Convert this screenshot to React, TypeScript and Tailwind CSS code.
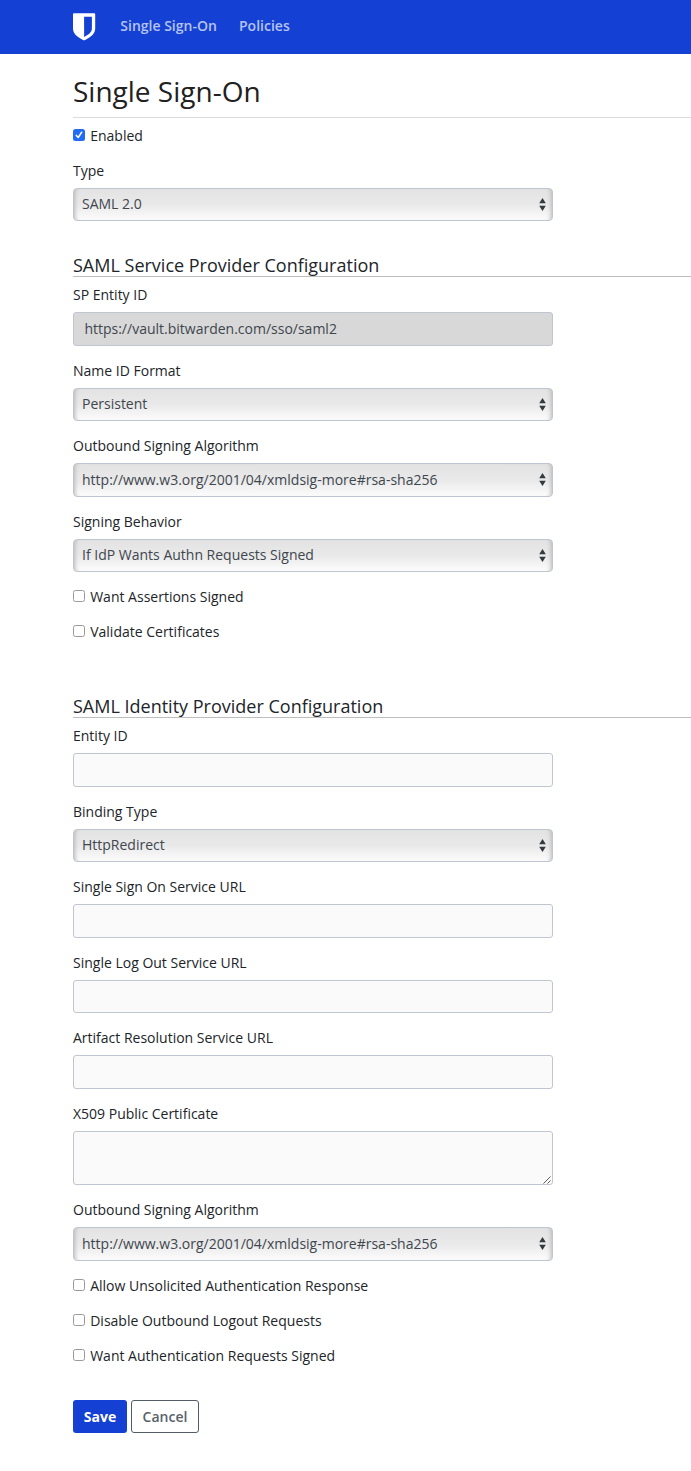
import type { ReactNode } from 'react';

function Field({ label, children }: { label: string; children: ReactNode }) {
  return (
    <div className="mb-[14px] w-[480px]">
      <div className="mb-[7px] h-[21px] leading-[21px]">{label}</div>
      {children}
    </div>
  );
}

function SelectBox({ value }: { value: string }) {
  return (
    <div className="flex h-[33.6px] items-center justify-between rounded-[4px] border border-[#bfc6d1] bg-linear-to-b from-[#e3e3e3] via-[#e9e9e9] to-[#fcfcfc] pr-[6px] pb-[0.4px] pl-[8px] text-[#3e464e] shadow-[inset_5px_0_4px_-4px_#b8b8b8,inset_-5px_0_4px_-4px_#b8b8b8]">
      <span className="leading-5">{value}</span>
      <svg width="7" height="13" viewBox="0 0 7 13" fill="#343a40">
        <path d="M3.5 0 6.8 5.2H.2ZM.2 7.8h6.6L3.5 13Z" />
      </svg>
    </div>
  );
}

function TextBox({ value }: { value?: string }) {
  return value ? (
    <div className="flex h-[33.6px] items-center rounded-[3px] border border-[#bfc6d1] bg-[#d8d8d8] px-[10.4px] text-[#3e464e]">
      {value}
    </div>
  ) : (
    <div className="h-[33.6px] rounded-[3px] border border-[#bfc6d1] bg-[#fafafa]" />
  );
}

function Check({ label, checked }: { label: string; checked?: boolean }) {
  return (
    <div className="mb-[14px] flex h-[21px] items-center gap-[5.2px]">
      {checked ? (
        <span className="mb-[2px] flex size-[12px] items-center justify-center rounded-[2.5px] bg-[#226cf5]">
          <svg width="8" height="8" viewBox="0 0 8 8" fill="none" stroke="#fff" strokeWidth="1.5" strokeLinecap="round" strokeLinejoin="round">
            <path d="M1.3 4.4 3.2 6.5 6.7 1.2" />
          </svg>
        </span>
      ) : (
        <span className="mb-[1px] size-[12px] rounded-[2.5px] border border-[#999] bg-white" />
      )}
      <span>{label}</span>
    </div>
  );
}

function SectionTitle({ children }: { children: ReactNode }) {
  return (
    <h2 className="h-[23px] border-b border-[#bebebe] text-[18px] leading-[23px] whitespace-nowrap">
      {children}
    </h2>
  );
}

export default function App() {
  return (
    <div className="h-[1471px] w-[691px] overflow-hidden bg-white font-['Open_Sans',sans-serif] text-[14px] text-[#212529]">
      <header className="flex h-[54px] items-center bg-[#1441d3] pl-[73px] font-semibold text-[#b6c3f1]">
        <svg width="23" height="28" viewBox="0 0 23 28">
          <path d="M1 .3h20.2q1 0 1 1v14.3c0 5-4 8.3-10 11.4q-1.1.5-2.2 0C4 23.9 0 20.6 0 15.6V1.3q0-1 1-1Z" fill="#fff" />
          <path d="M11.1 3.7h7.8v11.8c0 3.6-3.1 6-7.8 8.5Z" fill="#1441d3" />
        </svg>
        <nav className="mb-[4px] ml-[24.3px] flex gap-[22.2px]">
          <span>Single Sign-On</span>
          <span>Policies</span>
        </nav>
      </header>
      <main className="pl-[73px]">
        <h1 className="mt-[18px] mb-[7px] h-[46px] border-b border-[#dadcdf] text-[28px] leading-[39px] text-[#212121]">Single Sign-On</h1>
        <div className="h-[34.6px]">
          <Check label="Enabled" checked />
        </div>
        <Field label="Type">
          <SelectBox value="SAML 2.0" />
        </Field>
        <div className="mt-[32.8px] mb-[7px]">
          <SectionTitle>SAML Service Provider Configuration</SectionTitle>
        </div>
        <Field label="SP Entity ID">
          <TextBox value="https://vault.bitwarden.com/sso/saml2" />
        </Field>
        <Field label="Name ID Format">
          <SelectBox value="Persistent" />
        </Field>
        <Field label="Outbound Signing Algorithm">
          <SelectBox value="http://www.w3.org/2001/04/xmldsig-more#rsa-sha256" />
        </Field>
        <Field label="Signing Behavior">
          <SelectBox value="If IdP Wants Authn Requests Signed" />
        </Field>
        <Check label="Want Assertions Signed" />
        <Check label="Validate Certificates" />
        <div className="mt-[52.6px] mb-[7px]">
          <SectionTitle>SAML Identity Provider Configuration</SectionTitle>
        </div>
        <Field label="Entity ID">
          <TextBox />
        </Field>
        <Field label="Binding Type">
          <SelectBox value="HttpRedirect" />
        </Field>
        <Field label="Single Sign On Service URL">
          <TextBox />
        </Field>
        <Field label="Single Log Out Service URL">
          <TextBox />
        </Field>
        <Field label="Artifact Resolution Service URL">
          <TextBox />
        </Field>
        <Field label="X509 Public Certificate">
          <div className="flex h-[54px] items-end justify-end rounded-[3px] border border-[#bfc6d1] bg-[#fafafa] pr-px">
            <svg width="8" height="8" viewBox="0 0 8 8" stroke="#4b4b4b" strokeWidth=".9">
              <path d="M.5 7.5l7-7M4.5 7.5l3-3" />
            </svg>
          </div>
        </Field>
        <Field label="Outbound Signing Algorithm">
          <SelectBox value="http://www.w3.org/2001/04/xmldsig-more#rsa-sha256" />
        </Field>
        <Check label="Allow Unsolicited Authentication Response" />
        <Check label="Disable Outbound Logout Requests" />
        <Check label="Want Authentication Requests Signed" />
        <div className="mt-[34.4px] flex gap-[4px] font-semibold">
          <button className="h-[33px] w-[54px] rounded-[3px] bg-[#1441d3] font-bold text-white">Save</button>
          <button className="h-[33px] w-[68px] rounded-[3px] border border-[#525c65] text-[#58626b]">Cancel</button>
        </div>
      </main>
    </div>
  );
}
